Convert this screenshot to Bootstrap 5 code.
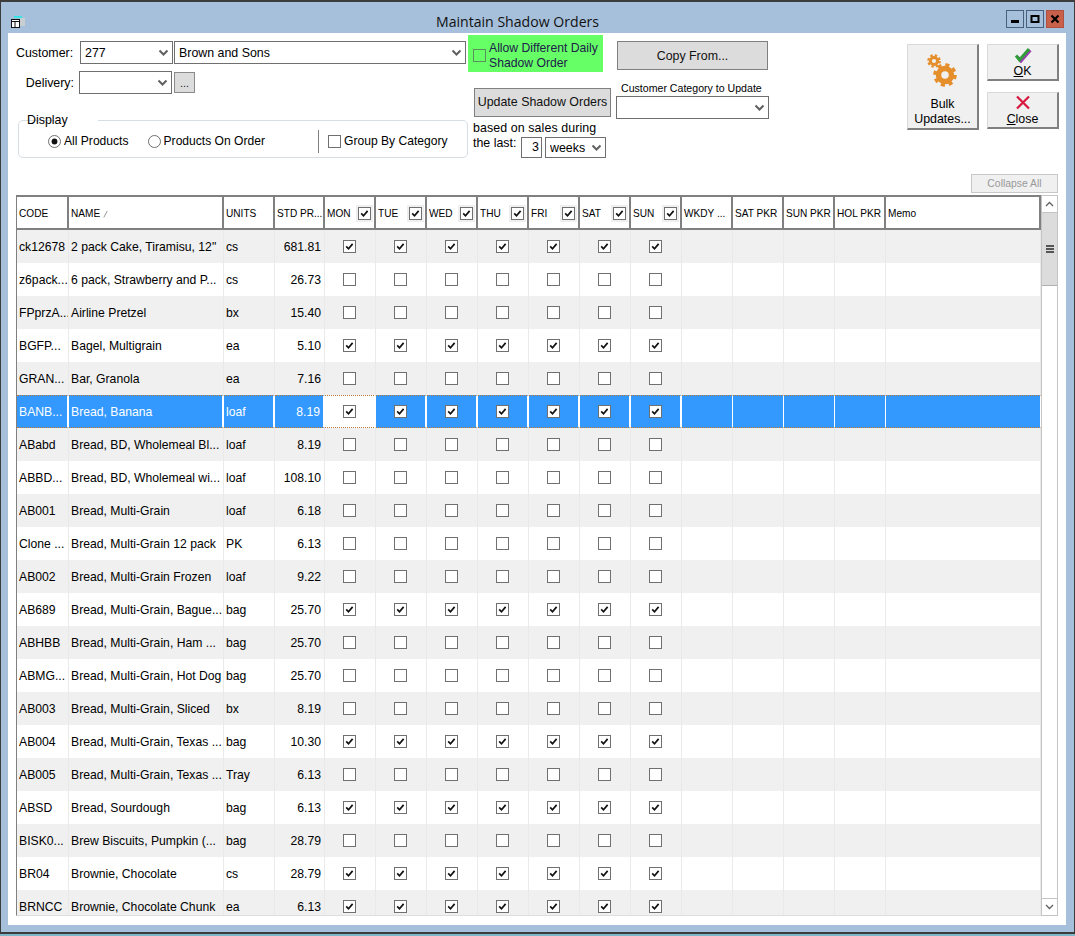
<!DOCTYPE html>
<html lang="en">
<head>
<meta charset="utf-8">
<title>Maintain Shadow Orders</title>
<link href="https://cdn.jsdelivr.net/npm/bootstrap@5.3.0/dist/css/bootstrap.min.css" rel="stylesheet">
<style>
html,body{height:936px;overflow:hidden;background:#7fb6c9;margin:0}
body{font-family:"Liberation Sans",Arial,sans-serif;font-size:12.4px;color:#000;line-height:15px}
.win-frame{height:934px;width:1075px;background:#a6c0dc;border:1px solid #3c3c3c;border-top-width:2px;border-bottom-width:2px;padding:0 8px 7px 7px}
.win-title{height:31px}
.win-icon{width:18px;margin:13px 0 0 3px;height:14px}
.win-name{font-family:"Open Sans",sans-serif;font-size:14.1px;line-height:20px;padding-top:10px;color:#111}
.win-btns{gap:2px;margin:8px 2px 0 0;height:18px}
.win-btn{width:18px;height:18px;border:1px solid #4a5f7d;background:#a6c0dc}
.win-btn.is-close{background:#c8604a;border-color:#b05040}
.win-body{width:1058px;height:892px;background:#fff;padding:0 8px}
.top-zone{height:141px}
.left-col{width:452px;padding-top:8px}
.field-label{width:57px;text-align:right;margin-right:7px;padding-top:1px}
.win-select.form-select{height:23px;padding:1px 16px 0 4px;border:1px solid #6f6f6f;border-radius:0;font-size:12.4px;line-height:20px;color:#000;background-image:url("data:image/svg+xml,%3csvg xmlns='http://www.w3.org/2000/svg' viewBox='0 0 11 9'%3e%3cpath d='M1.5 2.5 5.5 6.5 9.5 2.5' fill='none' stroke='%23606060' stroke-width='2'/%3e%3c/svg%3e");background-size:11px 9px;background-position:right 3px center;box-shadow:none}
.sel-code{width:93px}
.sel-name{width:292px;margin-left:1px}
.del-row{margin-top:7px}
.field-label.is-del{width:58px;margin-right:5px}
.dots-btn.btn{width:21px;height:21px;margin-left:2px;padding:0;border:1px solid #8a8a8a;border-radius:0;background:#dcdcdc;font-size:11px;line-height:18px;color:#222}
.disp-set{width:450px;height:45px;margin:19px 0 0 2px;border:1px solid #d5dde5;border-radius:5px;padding:0 0 0 29px}
.disp-set legend{float:none;width:auto;margin:0 0 0 7px;padding:0 1px;font-size:12.4px;line-height:14px;position:relative;left:-29px}
.disp-row{height:23px;margin-top:3px;font-size:12.1px}
.win-radio.form-check-input{width:13px;height:13px;margin:0 3px 0 0;border:1px solid #707070;background-color:#fff;flex:none;opacity:1}
.win-radio.form-check-input:checked[type=radio]{background-color:#fff;border-color:#707070;--bs-form-check-bg-image:url("data:image/svg+xml,%3csvg xmlns='http://www.w3.org/2000/svg' viewBox='-4 -4 8 8'%3e%3ccircle r='2.1' fill='%23111'/%3e%3c/svg%3e")}
.win-radio.form-check-input.opt-two{margin-left:19px}
.disp-sep{width:1px;height:23px;background:#808080;margin:0 9px 0 53px}
.win-check.form-check-input{width:13px;height:13px;margin:0;border:1px solid #707070;border-radius:0;background-color:#fff;flex:none;opacity:1;box-shadow:none}
.win-check.form-check-input:checked[type=checkbox]{background-color:#fff;border-color:#707070;--bs-form-check-bg-image:url("data:image/svg+xml,%3csvg xmlns='http://www.w3.org/2000/svg' viewBox='0 0 13 13'%3e%3cpath d='M2.6 6.4 5.3 9.2 10.2 3.4' fill='none' stroke='%23111' stroke-width='2'/%3e%3c/svg%3e")}
.win-check.form-check-input.chk-gap{margin-right:3px}
.mid-col{width:148px}
.green-box{width:135px;height:37px;margin-top:2px;background:#66ff66;padding:4px 0 0 5px;color:#20204a}
.green-box .win-check.form-check-input{background-color:transparent;border-color:#5c8f5c}
.green-text{margin-left:3px;line-height:15px;font-size:12.2px}
.gray-btn.btn{background:#dcdcdc;border:1px solid #808080;border-radius:0;padding:0;font-size:12.4px;line-height:15px;color:#111}
.upd-btn{width:137px;height:29px;margin:16px 0 0 6px}
.sales-text{margin:4px 0 0 5px;line-height:15px;letter-spacing:.1px}
.last-row{margin:1px 0 0 5px}
.last-text{margin-top:-1px;width:48px}
.num-box{width:21px;height:21px;border:1px solid #6f6f6f;padding:0 2px 0 0;text-align:right;line-height:19px;margin-right:3px}
.sel-weeks{width:61px}
.win-select.sel-weeks.form-select{height:21px;line-height:18px}
.third-col{width:153px;padding-top:8px}
.copy-btn.btn{width:151px;height:29px;margin-left:1px;padding-top:2px}
.cat-label{font-size:10.6px;line-height:14px;margin:11px 0 1px 5px;white-space:nowrap}
.act-zone{padding-top:11px;gap:8px;margin-right:-1px}
.raise-btn.btn{width:72px;background:#f0f0f0;border:1px solid #d9d9d9;border-right:2px solid #808080;border-bottom:2px solid #808080;border-radius:0;padding:0;font-size:12.4px;line-height:15px;color:#000}
.raise-btn.is-tall{height:86px;padding-top:8px}
.raise-btn.is-short{height:37px;padding-top:2px}
.icon-gap{margin-top:1px}
.close-text{margin-top:2px}
.close-gap{margin-top:11px}
.collapse-row{height:21px}
.collapse-btn.btn{width:87px;height:19px;padding:0;border:1px solid #c8c8c8;border-radius:0;background:#f0f0f0;color:#999;font-size:10.4px;line-height:15px}
.grid-wrap{height:722px}
.grid-view{width:1025px;height:721px;overflow:hidden;border-left:1px solid #808080;border-bottom:1px solid #dedede}
.data-table.table{width:1024px;table-layout:fixed;border-collapse:separate;border-spacing:0;margin:0;--bs-table-bg:transparent;--bs-table-striped-bg:transparent;font-size:12.2px;color:#000}
.data-table th{height:35px;padding:2px 3px 0 2px;border-top:2px solid #808080;border-bottom:2px solid #808080;border-right:2px solid #808080;background:#fff;font-size:10.1px;font-weight:400;line-height:14px;white-space:nowrap;overflow:hidden;vertical-align:middle;box-shadow:none}
.data-table td{height:33px;padding:2px 0 0 2px;border:0;border-right:1px solid #eaeaea;white-space:nowrap;overflow:hidden;vertical-align:middle;box-shadow:none;background:#fff}
.data-table tr.row-alt td{background:#f0f0f0;border-right-color:#e9e9e9}
.data-table tr.row-sel td{background:#3399ff;color:#fff;border-right:2px solid #fff;border-top:1px dotted #b97a3c;border-bottom:1px dotted #b97a3c}
.data-table tr.row-sel td.cell-empty{border-right-width:1px}
.data-table tr.row-sel td.cell-focus{background:#fff}
.data-table td.cell-price{text-align:right;padding:2px 3px 0 0}
.data-table td.cell-day{text-align:center;padding:0 2px 0 0}
.data-table tr.row-sel td.cell-day{padding-right:0}
.cell-day .win-check.form-check-input{display:block;margin:0 auto}
.head-pair{display:flex;justify-content:space-between;align-items:center}
.head-check{outline:2px solid #efefef}
.sort-mark{margin-left:3px;vertical-align:-1px}
.scroll-rail{width:17px;height:721px;border:1px solid #c4c4c4;border-top:0;border-bottom:0;background:#fff}
.scroll-end{height:18px;border-top:1px solid #c4c4c4;border-bottom:1px solid #c4c4c4}
.scroll-thumb{height:73px;background:#dcdcdc;border-bottom:1px solid #b0b0b0}
.scroll-space{flex:1}
.grip{width:8px;height:8px;background:repeating-linear-gradient(#555 0 2px,transparent 2px 3px)}
</style>
</head>
<body>
<div class="win-frame d-flex flex-column">
  <div class="win-title d-flex">
    <div class="win-icon">
      <svg width="16" height="14" viewBox="0 0 16 14"><rect x="3" y="0" width="8" height="2" fill="#39e6e6"/><rect x="9" y="2" width="5" height="8" fill="#c9ced3"/><rect x="0.5" y="3.5" width="8" height="8" fill="#fff" stroke="#111"/><path d="M.5 5.5H8.5M4 5.5V11.5" stroke="#111"/></svg>
    </div>
    <div class="win-name flex-grow-1 text-center">Maintain Shadow Orders</div>
    <div class="win-btns d-flex">
      <div class="win-btn d-flex align-items-center justify-content-center"><svg width="10" height="10" viewBox="0 0 10 10"><rect x="1" y="6" width="8" height="3" fill="#000"/></svg></div>
      <div class="win-btn d-flex align-items-center justify-content-center"><svg width="10" height="10" viewBox="0 0 10 10"><rect x="1.5" y="2" width="7" height="6" fill="none" stroke="#000" stroke-width="2"/></svg></div>
      <div class="win-btn is-close d-flex align-items-center justify-content-center"><svg width="10" height="10" viewBox="0 0 10 10"><path d="M1.5 1.5 8.5 8.5M8.5 1.5 1.5 8.5" stroke="#000" stroke-width="2.2"/></svg></div>
    </div>
  </div>
  <div class="win-body d-flex flex-column">
    <div class="top-zone d-flex">
      <div class="left-col">
        <div class="d-flex align-items-center">
          <span class="field-label">Customer:</span>
          <select class="form-select win-select sel-code"><option>277</option></select>
          <select class="form-select win-select sel-name"><option>Brown and Sons</option></select>
        </div>
        <div class="d-flex align-items-center del-row">
          <span class="field-label is-del">Delivery:</span>
          <select class="form-select win-select sel-code"><option></option></select>
          <button type="button" class="btn dots-btn">...</button>
        </div>
        <fieldset class="disp-set">
          <legend>Display</legend>
          <div class="d-flex align-items-center disp-row">
            <input class="form-check-input win-radio" type="radio" name="disp" checked>
            <span>All Products</span>
            <input class="form-check-input win-radio opt-two" type="radio" name="disp">
            <span>Products On Order</span>
            <span class="disp-sep"></span>
            <input class="form-check-input win-check chk-gap" type="checkbox">
            <span>Group By Category</span>
          </div>
        </fieldset>
      </div>
      <div class="mid-col">
        <div class="green-box d-flex align-items-center">
          <input class="form-check-input win-check" type="checkbox">
          <span class="green-text">Allow Different Daily<br>Shadow Order</span>
        </div>
        <button type="button" class="btn gray-btn upd-btn d-block">Update Shadow Orders</button>
        <div class="sales-text">based on sales during</div>
        <div class="d-flex last-row">
          <span class="last-text">the last:</span>
          <span class="num-box">3</span>
          <select class="form-select win-select sel-weeks"><option>weeks</option></select>
        </div>
      </div>
      <div class="third-col">
        <button type="button" class="btn gray-btn copy-btn d-block">Copy From...</button>
        <div class="cat-label">Customer Category to Update</div>
        <select class="form-select win-select sel-cat"><option></option></select>
      </div>
      <div class="act-zone d-flex ms-auto">
        <button type="button" class="btn raise-btn is-tall d-flex flex-column align-items-center">
          <svg width="36" height="36" viewBox="0 0 36 36">
            <g fill="none" stroke="#e58e2c">
              <circle cx="20" cy="22" r="6.5" stroke-width="5.5"/>
              <circle cx="20" cy="22" r="10" stroke-width="3.6" stroke-dasharray="4 3.85"/>
              <circle cx="9" cy="8" r="3.6" stroke-width="3"/>
              <circle cx="9" cy="8" r="5.6" stroke-width="2.4" stroke-dasharray="2.4 2"/>
            </g>
          </svg>
          <span class="mt-2">Bulk<br>Updates...</span>
        </button>
        <div class="d-flex flex-column">
          <button type="button" class="btn raise-btn is-short d-flex flex-column align-items-center">
            <svg width="18" height="16" viewBox="0 0 18 16"><path d="M2.5 9 6 13.5 15.5 2.5" fill="none" stroke="#9a3fb0" stroke-width="3" transform="translate(.9 .7)"/><path d="M2 8.5 5.5 13 15 2" fill="none" stroke="#2f9e36" stroke-width="3"/></svg>
            <span class="icon-gap"><u>O</u>K</span>
          </button>
          <button type="button" class="btn raise-btn is-short close-gap d-flex flex-column align-items-center">
            <svg width="16" height="15" viewBox="0 0 16 15"><path d="M2 1.5 14 13.5M14 1.5 2 13.5" stroke="#d8173f" stroke-width="2.2"/></svg>
            <span class="close-text"><u>C</u>lose</span>
          </button>
        </div>
      </div>
    </div>
    <div class="collapse-row d-flex justify-content-end">
      <button type="button" class="btn collapse-btn">Collapse All</button>
    </div>
    <div class="grid-wrap d-flex">
      <div class="grid-view">
        <table class="table data-table">
          <colgroup id="cols"></colgroup>
          <thead><tr id="headRow"></tr></thead>
          <tbody id="rows"></tbody>
        </table>
      </div>
      <div class="scroll-rail d-flex flex-column">
        <div class="scroll-end d-flex align-items-center justify-content-center"><svg width="9" height="6" viewBox="0 0 9 6"><path d="M1 5 4.5 1.5 8 5" fill="none" stroke="#606060" stroke-width="1.3"/></svg></div>
        <div class="scroll-thumb d-flex align-items-center justify-content-center"><div class="grip"></div></div>
        <div class="scroll-space"></div>
        <div class="scroll-end d-flex align-items-center justify-content-center"><svg width="9" height="6" viewBox="0 0 9 6"><path d="M1 1 4.5 4.5 8 1" fill="none" stroke="#606060" stroke-width="1.3"/></svg></div>
      </div>
    </div>
  </div>
</div>
<script>
var widths=[52,155,51,50,51,51,51,51,51,51,51,51,51,51,51,155];
document.getElementById('cols').innerHTML=widths.map(function(w){return '<col style="width:'+w+'px">'}).join('');
var days=['MON','TUE','WED','THU','FRI','SAT','SUN'];
var head='<th>CODE</th><th>NAME<svg class="sort-mark" width="5" height="8" viewBox="0 0 5 8"><path d="M.8 7.5 4.2 1" stroke="#999" fill="none"/></svg></th><th>UNITS</th><th>STD PR...</th>';
days.forEach(function(d){head+='<th><div class="head-pair"><span>'+d+'</span><input class="form-check-input win-check head-check" type="checkbox" checked></div></th>'});
['WKDY ...','SAT PKR','SUN PKR','HOL PKR','Memo'].forEach(function(d){head+='<th>'+d+'</th>'});
document.getElementById('headRow').innerHTML=head;
var data=[
['ck12678','2 pack Cake, Tiramisu, 12"','cs','681.81',1],
['z6pack...','6 pack, Strawberry and P...','cs','26.73',0],
['FPprzA...','Airline Pretzel','bx','15.40',0],
['BGFP...','Bagel, Multigrain','ea','5.10',1],
['GRAN...','Bar, Granola','ea','7.16',0],
['BANB...','Bread, Banana','loaf','8.19',1],
['ABabd','Bread, BD, Wholemeal Bl...','loaf','8.19',0],
['ABBD...','Bread, BD, Wholemeal wi...','loaf','108.10',0],
['AB001','Bread, Multi-Grain','loaf','6.18',0],
['Clone ...','Bread, Multi-Grain 12 pack','PK','6.13',0],
['AB002','Bread, Multi-Grain Frozen','loaf','9.22',0],
['AB689','Bread, Multi-Grain, Bague...','bag','25.70',1],
['ABHBB','Bread, Multi-Grain, Ham ...','bag','25.70',0],
['ABMG...','Bread, Multi-Grain, Hot Dog','bag','25.70',0],
['AB003','Bread, Multi-Grain, Sliced','bx','8.19',0],
['AB004','Bread, Multi-Grain, Texas ...','bag','10.30',1],
['AB005','Bread, Multi-Grain, Texas ...','Tray','6.13',0],
['ABSD','Bread, Sourdough','bag','6.13',1],
['BISK0...','Brew Biscuits, Pumpkin (...','bag','28.79',0],
['BR04','Brownie, Chocolate','cs','28.79',1],
['BRNCC','Brownie, Chocolate Chunk','ea','6.13',1]];
document.getElementById('rows').innerHTML=data.map(function(r,i){
  var cls=i===5?'row-sel':(i%2===0?'row-alt':'');
  var h='<tr class="'+cls+'"><td>'+r[0]+'</td><td>'+r[1]+'</td><td>'+r[2]+'</td><td class="cell-price">'+r[3]+'</td>';
  days.forEach(function(d,j){h+='<td class="cell-day'+(i===5&&j===0?' cell-focus':'')+'"><input class="form-check-input win-check" type="checkbox"'+(r[4]?' checked':'')+'></td>'});
  for(var k=0;k<5;k++)h+='<td class="cell-empty"></td>';
  return h+'</tr>';
}).join('');
</script>
<script src="https://cdn.jsdelivr.net/npm/bootstrap@5.3.0/dist/js/bootstrap.bundle.min.js"></script>
</body>
</html>
